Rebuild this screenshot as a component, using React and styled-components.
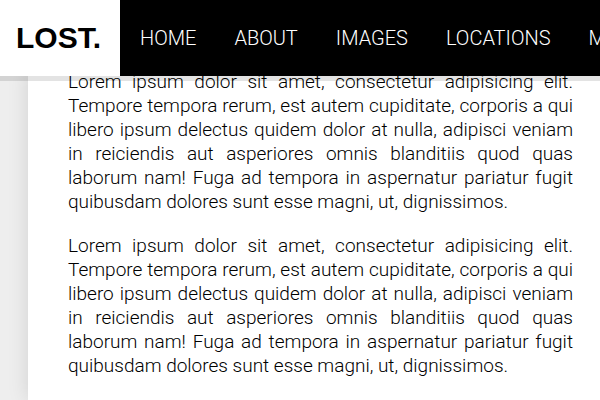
import React from "react";
import styled, { createGlobalStyle } from "styled-components";

const GlobalStyle = createGlobalStyle`
  * { box-sizing: border-box; }
  html, body { margin: 0; background: #eee; }
  body { font-family: Roboto, "Liberation Sans", Arial, sans-serif; }
`;

const Page = styled.div`
  min-height: 100vh;
  display: flex;
  flex-direction: column;
  overflow: hidden;
`;

const Header = styled.header`
  position: relative;
  z-index: 1;
  display: flex;
  height: 76px;
  background: #000;
  box-shadow: 0 5px 0 rgba(0, 0, 0, 0.11);
`;

const Logo = styled.a`
  flex: none;
  display: flex;
  align-items: center;
  padding: 0 16px;
  width: 120px;
  background: #fff;
  color: #000;
  font-family: "Liberation Sans", Arial, sans-serif;
  font-size: 30px;
  font-weight: 700;
  text-decoration: none;
`;

const Nav = styled.nav`
  display: flex;
  flex: 1;
  gap: 38px;
  min-width: 0;
  padding-left: 20px;
  overflow: hidden;
`;

const NavLink = styled.a`
  flex: none;
  display: flex;
  align-items: center;
  color: #fff;
  font-size: 20px;
  font-weight: 300;
  text-decoration: none;
`;

const Article = styled.main`
  flex: 1;
  margin: -6px 0 0 28px;
  padding: 0 27px 0 40px;
  background: #fff;
  box-shadow: 0 0 20px rgba(0, 0, 0, 0.12);
`;

const Paragraph = styled.p`
  margin: 0;
  color: #000;
  font-size: 19px;
  font-weight: 300;
  line-height: 24px;
  text-align: justify;

  & + & {
    margin-top: 20px;
  }
`;

const links = ["HOME", "ABOUT", "IMAGES", "LOCATIONS", "MORE"];
const text =
  "Lorem ipsum dolor sit amet, consectetur adipisicing elit. Tempore tempora rerum, est autem cupiditate, corporis a qui libero ipsum delectus quidem dolor at nulla, adipisci veniam in reiciendis aut asperiores omnis blanditiis quod quas laborum nam! Fuga ad tempora in aspernatur pariatur fugit quibusdam dolores sunt esse magni, ut, dignissimos.";

export default function App() {
  return (
    <Page>
      <GlobalStyle />
      <Header>
        <Logo href="#">LOST.</Logo>
        <Nav>
          {links.map((label) => (
            <NavLink key={label} href={`#${label.toLowerCase()}`}>{label}</NavLink>
          ))}
        </Nav>
      </Header>
      <Article>
        <Paragraph>{text}</Paragraph>
        <Paragraph>{text}</Paragraph>
      </Article>
    </Page>
  );
}
